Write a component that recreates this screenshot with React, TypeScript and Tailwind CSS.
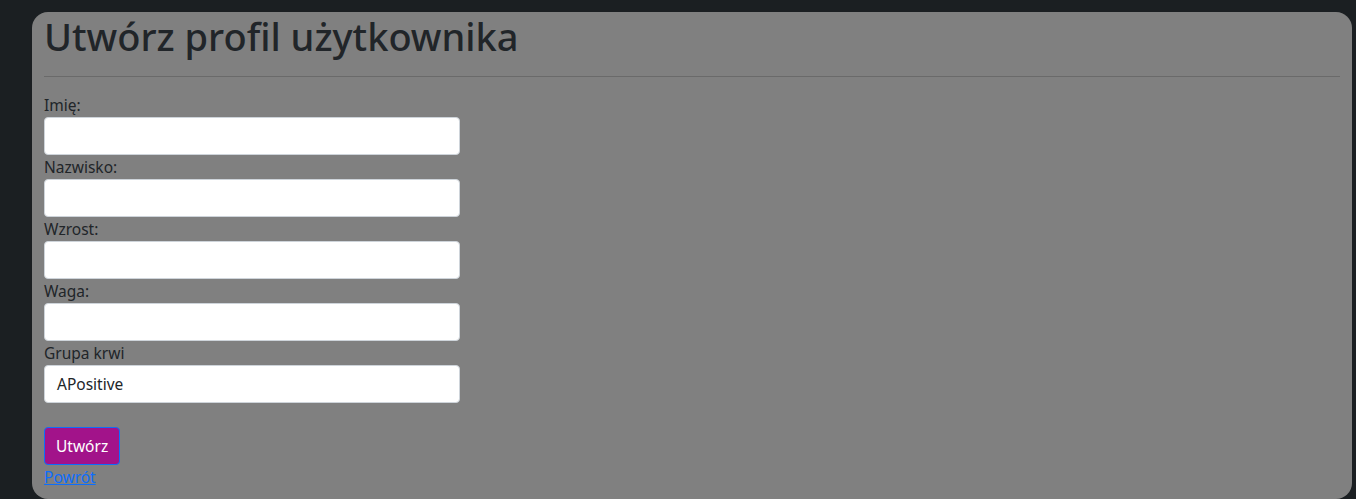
const fields = ["Imię:", "Nazwisko:", "Wzrost:", "Waga:"];

const App = () => {
  return (
    <div
      className="min-h-[499px] bg-[#1b1f22] pl-[32px] pr-[4px] pt-[12px]"
      style={{ fontFamily: '"Noto Sans", "Liberation Sans", sans-serif' }}
    >
      <div className="min-h-[487px] rounded-[16px] bg-[#808080] px-[12px] text-[15.5px] leading-[24px] text-[#212529]">
        <h1 className="text-[38px] leading-[48px] font-medium">Utwórz profil użytkownika</h1>
        <hr className="mt-[16px] mb-[16px] border-t border-[#6a6a6a]" />
        <form className="w-[416px]">
          {fields.map((label) => (
            <div key={label}>
              <label className="block">{label}</label>
              <input
                type="text"
                className="block h-[38px] w-full rounded-[4px] border border-[#ced4da] bg-white px-[12px]"
              />
            </div>
          ))}
          <label className="block">Grupa krwi</label>
          <div className="flex h-[38px] w-full items-center rounded-[4px] border border-[#ced4da] bg-white px-[12px]">
            APositive
          </div>
          <button
            type="button"
            className="mt-[24px] h-[38px] rounded-[4px] border border-[#0d6efd] bg-[#a2138a] px-[11px] text-white"
          >
            Utwórz
          </button>
        </form>
        <a href="#" className="block w-fit text-[#0d6efd] underline">
          Powrót
        </a>
      </div>
    </div>
  );
};

export default App;
